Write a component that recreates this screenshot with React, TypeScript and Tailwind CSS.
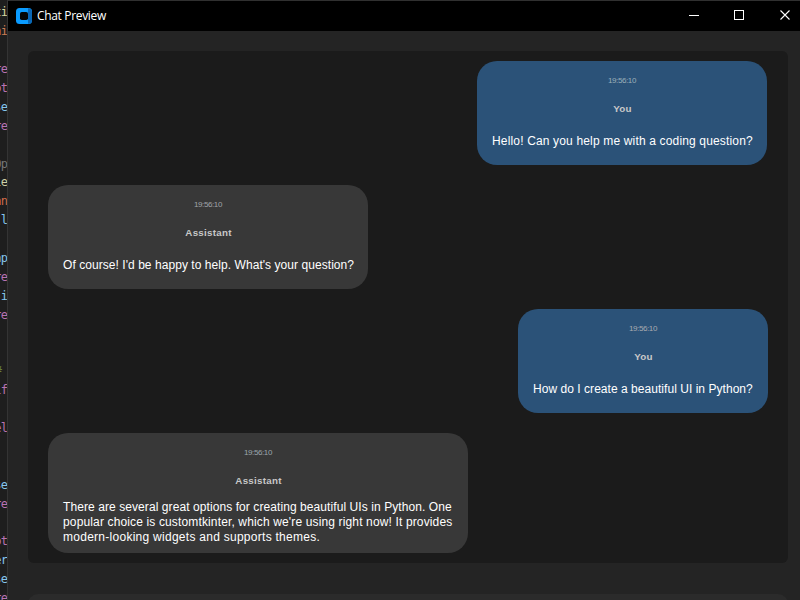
type Line = { text: string; tracking: string };

type Message = {
  sender: string;
  lines: Line[];
  bubble: string;
  time: string;
  textPad: string;
};

const MESSAGES: Message[] = [
  {
    sender: 'You',
    lines: [{ text: 'Hello! Can you help me with a coding question?', tracking: 'tracking-[0.16px]' }],
    bubble: 'ml-[449px] w-[290px] h-[104px] bg-[#2b5278]',
    time: 'text-[#9bb0b8]',
    textPad: 'mt-[19px]',
  },
  {
    sender: 'Assistant',
    lines: [{ text: "Of course! I'd be happy to help. What's your question?", tracking: 'tracking-[0.055px]' }],
    bubble: 'ml-5 w-[320px] h-[104px] bg-[#383838]',
    time: 'text-[#a0a4a8]',
    textPad: 'mt-[19px]',
  },
  {
    sender: 'You',
    lines: [{ text: 'How do I create a beautiful UI in Python?', tracking: 'tracking-[0.04px]' }],
    bubble: 'ml-[490px] w-[250px] h-[104px] bg-[#2b5278]',
    time: 'text-[#a9abb0]',
    textPad: 'mt-[19px]',
  },
  {
    sender: 'Assistant',
    lines: [
      {
        text: 'There are several great options for creating beautiful UIs in Python. One',
        tracking: 'tracking-[0.08px]',
      },
      {
        text: "popular choice is customtkinter, which we're using right now! It provides",
        tracking: 'tracking-[0.14px]',
      },
      { text: 'modern-looking widgets and supports themes.', tracking: 'tracking-[0.27px]' },
    ],
    bubble: 'ml-5 w-[420px] h-[120px] bg-[#383838]',
    time: 'text-[#9ba6ac]',
    textPad: 'mt-[13px]',
  },
];

// Tail ends of the editor lines showing at the left of the window.
const CODE: [string, string][] = [
  ['ti', 'text-[#d4d4a0]'],
  ['ni', 'text-[#c97b54]'],
  ['', ''],
  ['re', 'text-[#b873b2]'],
  ['pt', 'text-[#b873b2]'],
  ['se', 'text-[#86c5ec]'],
  ['re', 'text-[#b873b2]'],
  ['', ''],
  ['Op', 'text-[#777777]'],
  ['le', 'text-[#cfcfa5]'],
  ['an', 'text-[#d16b4a]'],
  ['l', 'text-[#86c5ec]'],
  ['', ''],
  ['ap', 'text-[#86c5ec]'],
  ['re', 'text-[#b873b2]'],
  ['i', 'text-[#86c5ec]'],
  ['re', 'text-[#b873b2]'],
  ['', ''],
  ['', ''],
  ['#', 'text-[#66803c] pr-[6px]'],
  ['if', 'text-[#b873b2]'],
  ['', ''],
  ['el', 'text-[#b873b2]'],
  ['', ''],
  ['', ''],
  ['se', 'text-[#86c5ec]'],
  ['re', 'text-[#b873b2]'],
  ['', ''],
  ['pt', 'text-[#b873b2]'],
  ['er', 'text-[#86c5ec]'],
  ['se', 'text-[#86c5ec]'],
  ['re', 'text-[#b873b2]'],
];

function EditorStrip() {
  return (
    <div className="flex h-full w-2 shrink-0 flex-col overflow-hidden border-r border-[#343434] bg-[#1e1e1e] pt-[3px] font-['DejaVu_Sans_Mono',monospace] text-[12px] tracking-[-0.9px]">
      {CODE.map(([text, color], i) => (
        <div key={i} className={`flex h-[18.9px] shrink-0 items-center justify-end leading-none ${color}`}>
          {text}
        </div>
      ))}
    </div>
  );
}

function TitleBar() {
  return (
    <div className="flex h-[31px] shrink-0 items-center border-t border-[#303030] bg-black pl-2">
      <svg className="mb-px" width="16" height="16" viewBox="0 0 16 16">
        <rect width="16" height="16" rx="3.5" fill="#0a9bff" />
        <path d="M12 0.2Q16 0.2 16 4V12Q16 15.8 12 15.8Z" fill="#0a66b5" />
        <rect x="4" y="4" width="8" height="8" rx="1.8" fill="#050505" />
      </svg>
      <span className="ml-[5px] font-['Open_Sans',sans-serif] text-[12px] leading-4 tracking-[-0.33px] text-white">
        Chat Preview
      </span>
      <svg className="ml-auto" width="111" height="12" viewBox="0 0 111 12" fill="none" stroke="#ffffff">
        <path d="M0 5.5h10M45.5 0.5h9v9h-9z" shapeRendering="crispEdges" />
        <path d="M91.5 0.5l9 9M100.5 0.5l-9 9" strokeWidth="1.1" />
      </svg>
    </div>
  );
}

function Bubble({ message }: { message: Message }) {
  return (
    <div className={`flex shrink-0 flex-col items-center rounded-[20px] ${message.bubble}`}>
      <div className={`mt-[15px] text-[8px] leading-[10px] tracking-[-0.4px] ${message.time}`}>19:56:10</div>
      <div className="mt-[17px] pl-px text-[9.8px] leading-3 font-bold tracking-[0.25px] text-[#c8c8c8]">
        {message.sender}
      </div>
      <div className={`w-full pl-[15px] text-[12px] leading-[15px] whitespace-nowrap text-white ${message.textPad}`}>
        {message.lines.map((line) => (
          <div key={line.text} className={line.tracking}>
            {line.text}
          </div>
        ))}
      </div>
    </div>
  );
}

export default function App() {
  return (
    <div className="flex h-[600px] w-[800px] overflow-hidden bg-[#242424] font-['Liberation_Sans',Arial,sans-serif]">
      <EditorStrip />
      <div className="flex min-w-0 flex-1 flex-col">
        <TitleBar />
        <main className="flex flex-1 flex-col px-5 pt-5">
          <section className="-mr-2 flex h-[512px] w-[760px] shrink-0 flex-col gap-5 rounded-[6px] bg-[#1b1b1b] pt-[10px]">
            {MESSAGES.map((message, i) => (
              <Bubble key={i} message={message} />
            ))}
          </section>
          <div className="mt-[31px] h-[6px] w-[760px] shrink-0 overflow-hidden">
            <div className="h-10 rounded-[10px] bg-[#2b2b2b]" />
          </div>
        </main>
      </div>
    </div>
  );
}
